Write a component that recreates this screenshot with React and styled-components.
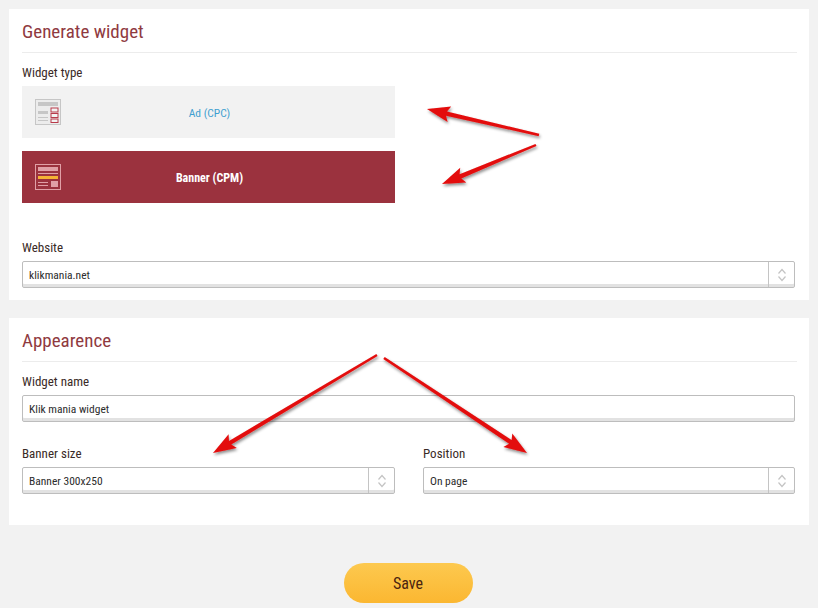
import React from 'react';
import styled, { createGlobalStyle } from 'styled-components';

const GlobalStyle = createGlobalStyle`
html, body {
  margin: 0;
  padding: 0;
  background: #f2f2f2;
}
body {
  font-family: "Roboto", "Liberation Sans", sans-serif;
  font-stretch: 75%;
  color: #3a2a26;
}
* { box-sizing: border-box; }
`;

const Page = styled.div`
position: relative;
width: 818px;
height: 608px;
padding: 9px 9px 0;
overflow: hidden;
`;

const Card = styled.section`
background: #fff;
padding: 0 14px 0 13px;
height: ${({ h }) => h}px;
margin-bottom: 18px;
`;

const Title = styled.h2`
margin: 0 -2px 0 0;
height: 44px;
padding-top: 11px;
font-size: 19px;
line-height: 24px;
font-weight: 400;
color: #8f3a3f;
border-bottom: 1px solid #ececec;
`;

const Label = styled.div`
font-size: 13px;
line-height: 18px;
color: #3a2a26;
margin-bottom: 4px;
padding-top: ${({ top }) => top || 0}px;
`;

const TypeList = styled.div`
display: flex;
flex-direction: column;
gap: 13px;
width: 373px;
`;

const TypeOption = styled.div`
position: relative;
height: 52px;
display: flex;
align-items: center;
justify-content: center;
padding: 1px 0 0 2px;
font-size: ${({ active }) => (active ? 12 : 11.5)}px;
font-weight: ${({ active }) => (active ? 700 : 400)};
background: ${({ active }) => (active ? '#9b323e' : '#f2f2f2')};
color: ${({ active }) => (active ? '#fff' : '#3f9fd0')};
`;

const IconSlot = styled.span`
position: absolute;
left: 13px;
top: 13px;
width: 26px;
height: 26px;
`;

const Field = styled.div`
display: flex;
height: 27px;
background: #fff;
border: 1px solid #bdbdbd;
border-radius: 2px;
box-shadow: inset 0 -3px 0 #e2e2e2;
font-size: 11.5px;
color: #2c2c2c;
`;

const FieldText = styled.div`
flex: 1;
padding-left: 6px;
line-height: 26px;
`;

const Spinner = styled.div`
width: 26px;
border-left: 1px solid #c4c4c4;
display: flex;
align-items: center;
justify-content: center;
`;

const Columns = styled.div`
display: grid;
grid-template-columns: 373px 372px;
gap: 28px;
padding-top: 23px;
`;

const Actions = styled.div`
display: flex;
justify-content: center;
padding-top: 20px;
padding-right: 2px;
`;

const SaveButton = styled.button`
width: 129px;
height: 40px;
border: none;
border-radius: 20px;
background: linear-gradient(#fdc94f, #fbb731);
color: #4a2410;
font-family: inherit;
font-stretch: inherit;
font-size: 16px;
`;

const Arrows = styled.svg`
position: absolute;
left: 0;
top: 0;
pointer-events: none;
`;

const DocIcon = ({ active }) => {
  const line = active ? '#e0a0a6' : '#c6c6c6';
  const mark = active ? '#f5b335' : '#b83a4a';
  return (
    <svg width="26" height="26" viewBox="0 0 26 26">
      <rect x="0.5" y="0.5" width="25" height="25" fill={active ? 'none' : '#ececec'} stroke={line} />
      <rect x="3" y="3" width="20" height="4" fill={line} />
      {active ? (
        <>
          <rect x="3" y="12" width="20" height="3" fill={mark} />
          <rect x="3" y="9" width="20" height="1" fill={line} />
          <rect x="3" y="18" width="10" height="1" fill={line} />
          <rect x="3" y="21" width="10" height="1" fill={line} />
          <rect x="16" y="17" width="7" height="6" fill={line} />
        </>
      ) : (
        <>
          <rect x="3" y="12" width="10" height="3" fill={line} />
          <rect x="3" y="18" width="10" height="1" fill={line} />
          <rect x="3" y="21" width="10" height="1" fill={line} />
          <rect x="16" y="9" width="7" height="4" fill="#f2f2f2" stroke={mark} />
          <rect x="16" y="14.5" width="7" height="4" fill="#f2f2f2" stroke={mark} />
          <rect x="16" y="20" width="7" height="3.5" fill="#f2f2f2" stroke={mark} />
        </>
      )}
    </svg>
  );
};

const SpinIcon = () => (
  <svg width="10" height="14" viewBox="0 0 10 14" fill="none" stroke="#c4c4c4" strokeWidth="1.2">
    <path d="M1.5 5.5 5 1.5l3.5 4" />
    <path d="M1.5 8.5 5 12.5l3.5-4" />
  </svg>
);

const Select = ({ value }) => (
  <Field>
    <FieldText>{value}</FieldText>
    <Spinner><SpinIcon /></Spinner>
  </Field>
);

const arrowData = [
  [539, 135, 427, 109],
  [536, 145, 442, 184],
  [377, 355, 213, 453],
  [384, 358, 527, 453],
];

// tapered shaft with a barbed head, tail -> tip
const arrowPath = ([x1, y1, x2, y2]) => {
  const dx = x2 - x1;
  const dy = y2 - y1;
  const len = Math.hypot(dx, dy);
  const ux = dx / len;
  const uy = dy / len;
  const px = -uy;
  const py = ux;
  const pt = (along, side) => `${(x1 + ux * along + px * side).toFixed(1)} ${(y1 + uy * along + py * side).toFixed(1)}`;
  const neck = len - 20;
  return `M${pt(0, -1.2)} L${pt(neck, -2.2)} L${pt(neck - 3, -8)} L${x2} ${y2} L${pt(neck - 3, 8)} L${pt(neck, 2.2)} L${pt(0, 1.2)} Z`;
};

const App = () => (
  <Page>
    <GlobalStyle />
    <Card h={291}>
      <Title>Generate widget</Title>
      <Label top={11}>Widget type</Label>
      <TypeList>
        <TypeOption>
          <IconSlot><DocIcon /></IconSlot>
          Ad (CPC)
        </TypeOption>
        <TypeOption active>
          <IconSlot><DocIcon active /></IconSlot>
          Banner (CPM)
        </TypeOption>
      </TypeList>
      <Label top={36}>Website</Label>
      <Select value="klikmania.net" />
    </Card>
    <Card h={207}>
      <Title>Appearence</Title>
      <Label top={11}>Widget name</Label>
      <Field><FieldText>Klik mania widget</FieldText></Field>
      <Columns>
        <div>
          <Label>Banner size</Label>
          <Select value="Banner 300x250" />
        </div>
        <div>
          <Label>Position</Label>
          <Select value="On page" />
        </div>
      </Columns>
    </Card>
    <Actions>
      <SaveButton>Save</SaveButton>
    </Actions>
    <Arrows width="818" height="608" viewBox="0 0 818 608">
      <defs>
        <filter id="arrowShadow" x="-20%" y="-20%" width="140%" height="140%">
          <feDropShadow dx="1" dy="2" stdDeviation="1.5" floodColor="#000" floodOpacity="0.45" />
        </filter>
      </defs>
      {arrowData.map((a, i) => (
        <path key={i} d={arrowPath(a)} fill="#e30b0b" filter="url(#arrowShadow)" />
      ))}
    </Arrows>
  </Page>
);

export default App;
